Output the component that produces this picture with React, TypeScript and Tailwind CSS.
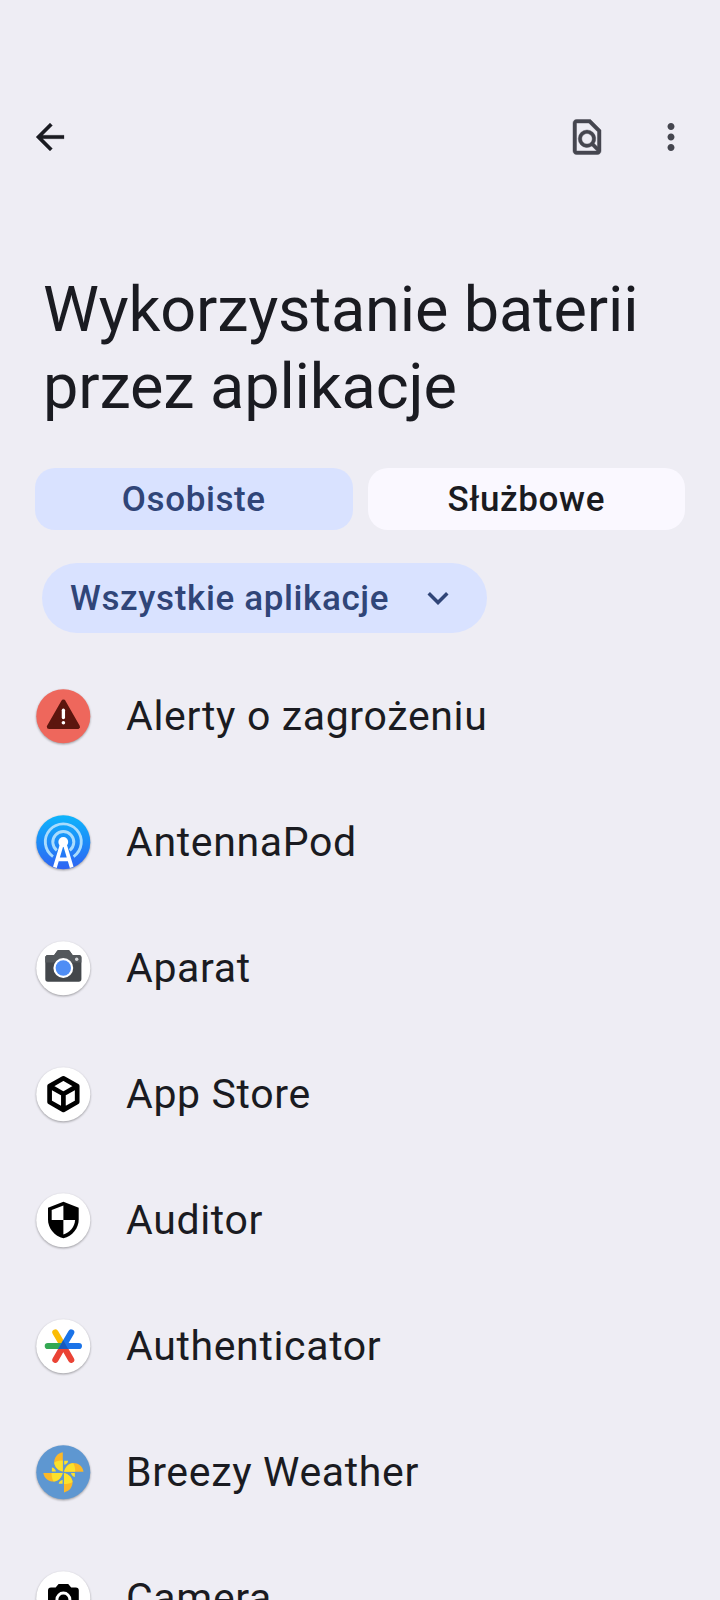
import { useId, useState } from 'react'
import type { ReactNode } from 'react'
import { MdArrowBack, MdExpandMore, MdMoreVert, MdOutlineFindInPage } from 'react-icons/md'

const tabCls = 'h-[62px] flex-1 rounded-[20px] pt-px text-[35px] leading-[62px] font-medium tracking-[0.6px]'

function IconDisc({ fill = '#fff', children }: { fill?: string; children: ReactNode }) {
  return (
    <svg viewBox="0 0 54 54" className="size-[54px] shrink-0 overflow-visible drop-shadow-[0_1px_0.8px_rgba(0,0,0,0.35)]">
      <circle cx="27.3" cy="27.2" r="27" fill={fill} />
      {children}
    </svg>
  )
}

function AlertIcon() {
  return (
    <IconDisc fill="#ee675c">
      <path d="M27.4 12.8 41.7 37.8H13.1Z" fill="#5c160e" stroke="#5c160e" strokeWidth="4.6" strokeLinejoin="round" />
      <path d="M27.4 21.2v7.4" stroke="#fff" strokeWidth="3.3" strokeLinecap="round" />
      <circle cx="27.4" cy="33.7" r="1.8" fill="#fff" />
    </IconDisc>
  )
}

function AntennaIcon() {
  const id = useId()
  return (
    <IconDisc fill={`url(#${id})`}>
      <defs>
        <linearGradient id={id} x1="0" y1="0" x2="0" y2="1">
          <stop offset="0" stopColor="#0db5fc" />
          <stop offset="1" stopColor="#2e63f3" />
        </linearGradient>
      </defs>
      <g fill="none" stroke="#a9dcfd" strokeWidth="2.9">
        <path d="M17 41.6a18 18 0 1 1 20.6 0" />
        <path d="M20.8 35.3a10.5 10.5 0 1 1 13 0" />
      </g>
      <circle cx="27.3" cy="27" r="4.9" fill="#fff" />
      <path d="M26.2 28 18.9 52.4M28.4 28 35.7 52.4M22 44.3h10.6" fill="none" stroke="#fff" strokeWidth="3.8" />
    </IconDisc>
  )
}

function CameraIcon() {
  return (
    <IconDisc>
      <path d="M12 14h6.2l3-4.2q.6-.8 1.6-.8h9.2q1 0 1.6.8l3 4.2h6.2q2.6 0 2.6 2.6v21.4q0 2.7-2.6 2.7H12q-2.7 0-2.7-2.7V16.6Q9.3 14 12 14Z" fill="#43474b" />
      <path d="M9.3 21.5v-4.9Q9.3 14 12 14h6.2l3-4.2q.6-.8 1.6-.8h9.2q1 0 1.6.8l3 4.2h6.2q2.6 0 2.6 2.6v4.9Z" fill="#54585c" />
      <circle cx="27.3" cy="27" r="9.9" fill="#fff" />
      <circle cx="27.3" cy="27" r="7.7" fill="#4e8df5" />
      <circle cx="40.7" cy="18.3" r="1.7" fill="#d5d7da" />
    </IconDisc>
  )
}

function StoreIcon() {
  return (
    <IconDisc>
      <path d="M27.4 11.3 41.2 19.1v15.9l-13.8 7.9-13.8-7.9V19.1ZM13.6 19.1l13.8 7.9 13.8-7.9M27.4 27v15.9" fill="none" stroke="#000" strokeWidth="4.7" strokeLinejoin="round" />
    </IconDisc>
  )
}

function ShieldIcon() {
  return (
    <IconDisc>
      <path d="M27.4 8.7 12 14.8v11.6c0 8.8 6.4 16.4 15.4 18.9 9-2.5 15.3-10.1 15.3-18.9V14.8Z" fill="#000" />
      <path d="M27.4 12.4V27H15.7V17.1Z" fill="#fff" />
      <path d="M27.4 27h11.7c-.4 6.6-5 12.4-11.7 14.6Z" fill="#fff" />
    </IconDisc>
  )
}

function AuthenticatorIcon() {
  return (
    <IconDisc>
      <g fill="none" strokeWidth="6.2" strokeLinecap="round">
        <path d="M27.3 27 19.4 13.5" stroke="#fbbc04" />
        <path d="M27.3 27 19.4 40.7M27.3 27l7.9 13.7" stroke="#ea4335" />
        <path d="M27.3 27H11.8" stroke="#34a853" />
        <path d="M35.2 13.5 27.3 27h15.6" stroke="#1a73e8" />
      </g>
      <path d="M27.3 21.2 32.2 30h-9.9Z" fill="#185abc" />
    </IconDisc>
  )
}

function PinwheelIcon() {
  return (
    <IconDisc fill="#5e97d1">
      {[0, 90, 180, 270].map(a => (
        <g key={a} transform={`rotate(${a} 27.4 27.3)`}>
          <path d="M26.8 26.6V7.2C21.5 8 18 12.6 18.2 18c.3 4 3.8 7.4 8.6 8.6Z" fill="#fcb827" />
          <path d="M26.8 26.6V15.5c-3.5 0-6.6.5-8.5 2 .4 4.4 3.7 8 8.5 9.1Z" fill="#fbe12c" />
          <path d="M28.2 15.8h3.9q-.3 3-3.9 4Z" fill="#fbe12c" />
        </g>
      ))}
    </IconDisc>
  )
}

function PhotoIcon() {
  return (
    <IconDisc>
      <path d="M15 16.5h4.6l3-3.5h9.6l3 3.5h4.6q3 0 3 3v18q0 3-3 3H15q-3 0-3-3v-18q0-3 3-3Z" fill="#000" />
      <circle cx="27.4" cy="28.5" r="6.5" fill="none" stroke="#fff" strokeWidth="2.9" />
    </IconDisc>
  )
}

const apps = [
  { name: 'Alerty o zagrożeniu', icon: <AlertIcon /> },
  { name: 'AntennaPod', icon: <AntennaIcon /> },
  { name: 'Aparat', icon: <CameraIcon /> },
  { name: 'App Store', icon: <StoreIcon /> },
  { name: 'Auditor', icon: <ShieldIcon /> },
  { name: 'Authenticator', icon: <AuthenticatorIcon /> },
  { name: 'Breezy Weather', icon: <PinwheelIcon /> },
  { name: 'Camera', icon: <PhotoIcon /> },
]

export default function App() {
  const [tab, setTab] = useState('Osobiste')

  return (
    <div className="h-[1600px] w-[720px] overflow-hidden bg-[#eeedf4] font-['Roboto',sans-serif] text-[#1a1b21]">
      <header className="flex items-center pt-[116px] pr-7 pl-[28.5px]">
        <button aria-label="Wstecz"><MdArrowBack className="size-[42px] [&>path:last-child]:stroke-[0.15]" /></button>
        <button aria-label="Szukaj" className="ml-auto text-[#45464f]"><MdOutlineFindInPage className="size-[42px] [&>path:last-child]:stroke-[0.25]" /></button>
        <button aria-label="Więcej" className="ml-[42px] text-[#45464f]"><MdMoreVert className="size-[42px]" /></button>
      </header>

      <h1 className="mt-[113px] ml-[43px] text-[63px] leading-[77px] tracking-[-0.13px]">
        Wykorzystanie baterii
        <br />
        przez aplikacje
      </h1>

      <div className="mt-[43px] flex gap-[15px] pr-[35px] pl-[35px]">
        {['Osobiste', 'Służbowe'].map(t => (
          <button key={t} onClick={() => setTab(t)} className={`${tabCls} ${tab === t ? 'bg-[#d9e2ff] text-[#304578]' : 'bg-[#faf8ff]'}`}>
            {t}
          </button>
        ))}
      </div>

      <button className="mt-[33px] ml-[42px] flex h-[70px] w-[445px] items-center justify-between rounded-full bg-[#d9e2ff] pr-7 pl-7 text-[35px] font-medium tracking-[0.63px] text-[#304578]">
        <span className="pt-0.5">Wszystkie aplikacje</span>
        <MdExpandMore className="size-[42px]" />
      </button>

      <ul className="mt-5">
        {apps.map(app => (
          <li key={app.name} className="flex h-[126px] items-center gap-9 pl-9">
            {app.icon}
            <span className="text-[41px] leading-[56px] tracking-[0.65px]">{app.name}</span>
          </li>
        ))}
      </ul>
    </div>
  )
}
